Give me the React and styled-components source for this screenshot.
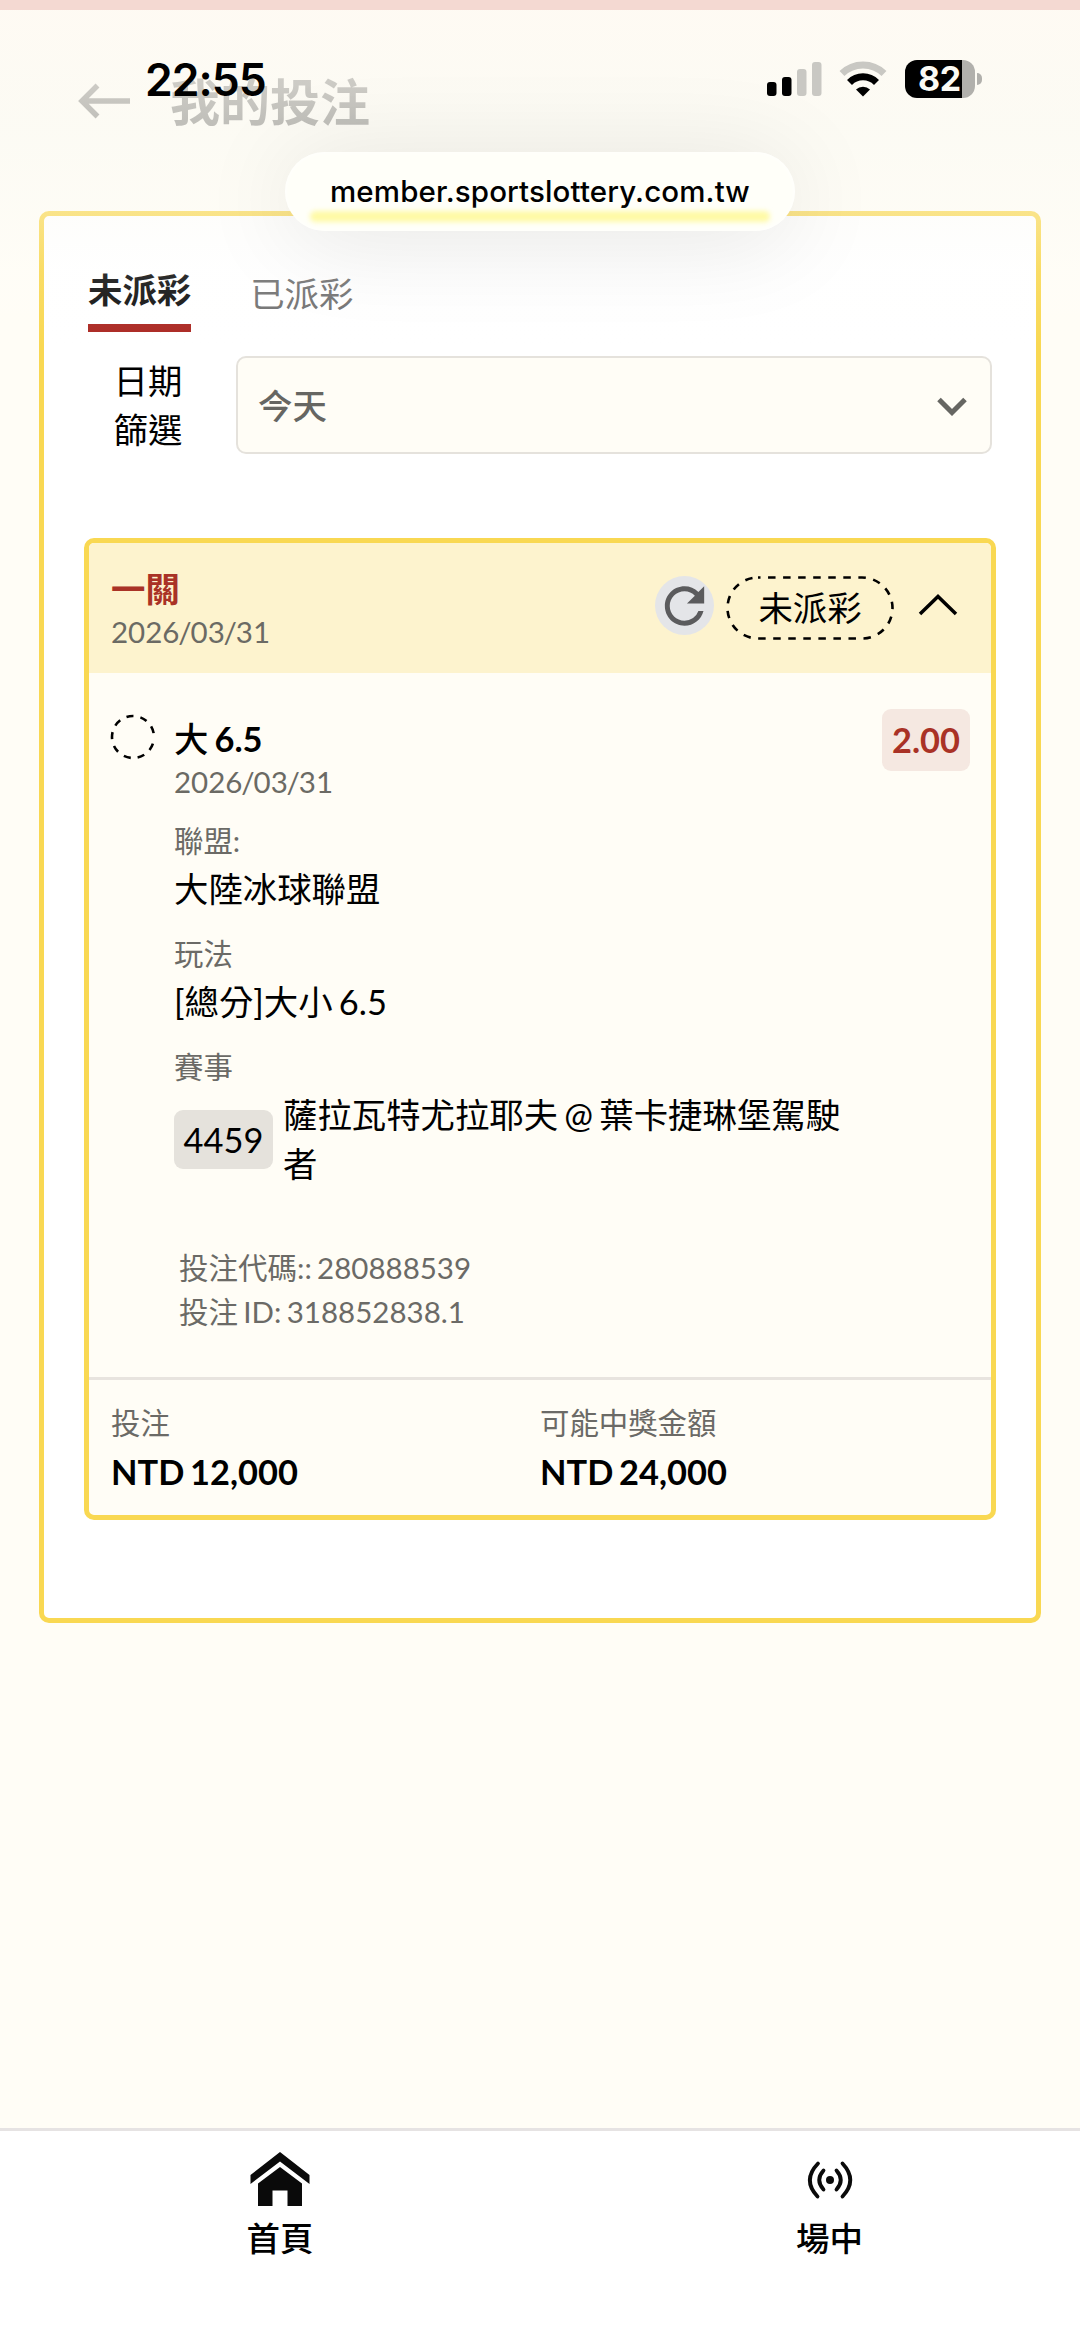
import React, { useState } from 'react'
import styled, { createGlobalStyle } from 'styled-components'
import { MdRefresh } from 'react-icons/md';


const GlobalStyle = createGlobalStyle`
    * {
        box-sizing: border-box;
        word-spacing: -0.075em;
    }
    body {
        margin: 0;
        background-color: #fffdf6;
        font-family: "Lato", "Noto Sans CJK TC", sans-serif;
        color: black;
    }
`;

const Container = styled.div`
    position: relative;
    width: 1080px;
    height: 2347px;
    display: flex;
    flex-direction: column;
    overflow: hidden;
    background-color: #fffdf6;
`;

const Header = styled.header`
    height: 211px;
    padding: 75px 0px 0px 77px;
    display: flex;
    align-items: flex-start;
    gap: 38px;
`;

const Title = styled.h1`
    margin: 0;
    font-size: 50px;
    line-height: 54px;
    font-weight: 700;
`;

const BackIcon = styled.svg`
    width: 55px;
    height: 54px;
`;

/* translucent system area that floats over the scrolled page */
const SystemArea = styled.div`
    position: absolute;
    top: 0;
    left: 0;
    width: 100%;
    height: 350px;
    border-top: 10px solid #f4d9d2;
    background: linear-gradient(to bottom, rgba(254,250,243,0.84) 0px, rgba(252,250,243,0.81) 75px,
        rgba(251,250,243,0.76) 116px, rgba(251,250,244,0.33) 205px, rgba(253,253,251,0.12) 260px, rgba(255,255,255,0) 340px);
    display: flex;
    flex-direction: column;
    align-items: center;
`;

const StatusBar = styled.div`
    width: 100%;
    height: 142px;
    padding: 43px 98px 0px 145px;
    display: flex;
    justify-content: space-between;
    align-items: flex-start;
    font-family: "Inter", sans-serif;
`;

const Time = styled.span`
    font-size: 44.5px;
    line-height: 54px;
    font-weight: 600;
    letter-spacing: -1px;
`;

const StatusIcons = styled.div`
    display: flex;
    padding-top: 7px;
`;

const Signal = styled.svg`
    width: 55px;
    height: 38px;
    margin-right: 17px;
`;

const Wifi = styled.svg`
    width: 48px;
    height: 38px;
    margin-right: 18px;
`;

const Battery = styled.div`
    width: 70px;
    height: 38px;
    border-radius: 12px;
    background: linear-gradient(to right, black 57px, #b1b0ac 57px);
    color: #fbfaf4;
    font-size: 34px;
    line-height: 38px;
    font-weight: 700;
    letter-spacing: -0.5px;
    padding-left: 13px;
`;

const BatteryTip = styled.div`
    width: 5px;
    height: 12px;
    margin: 13px 0px 0px 2px;
    border-radius: 0px 5px 5px 0px;
    background-color: #b1b0ac;
`;

const AddressPill = styled.div`
    position: relative;
    width: 510px;
    height: 79px;
    flex-shrink: 0;
    border-radius: 40px;
    background-color: #fffff9;
    box-shadow: 0px 8px 96px rgba(0,0,0,0.1), inset 0px 0px 5px white;
    display: flex;
    justify-content: center;
    font-family: "Inter", sans-serif;
    font-size: 29.5px;
    line-height: 79px;
    font-weight: 500;
    letter-spacing: 0.13px;
`;

const PillGlow = styled.div`
    position: absolute;
    left: 25px;
    right: 25px;
    bottom: 9px;
    height: 11px;
    border-radius: 6px;
    background-color: #fffaa6;
    filter: blur(2.5px);
`;

const Panel = styled.main`
    margin: 0px 39px;
    height: 1412px;
    padding: 48px 40px 0px;
    border: 5px solid #f9d852;
    border-radius: 10px;
    background-color: white;
`;

const Tabs = styled.div`
    display: flex;
    align-items: flex-start;
    gap: 59px;
    padding-left: 4px;
    height: 68px;
`;

const Tab = styled.div`
    font-size: 34.4px;
    line-height: 52px;
    cursor: pointer;
    font-weight: ${props=>props.$active ? "700" : "400"};
    color: ${props=>props.$active ? "#111" : "#707070"};
    padding: ${props=>props.$active ? "0px 0px 8px" : "4px 0px"};
    border-bottom: ${props=>props.$active ? "8px solid #ab2822" : "none"};
`;

const Filter = styled.div`
    display: flex;
    align-items: center;
    margin-top: 24px;
    padding: 0px 4px 0px 29px;
`;

const FilterLabel = styled.div`
    width: 70px;
    font-size: 34.4px;
    line-height: 49px;
    height: 98px;
    text-align: center;
`;

const Select = styled.div`
    flex: 1;
    height: 98px;
    margin-left: 53px;
    padding: 0px 23px 3px 20px;
    border: 2.5px solid #e5e2dc;
    border-radius: 10px;
    background-color: #fffdf6;
    display: flex;
    align-items: center;
    justify-content: space-between;
    font-size: 34.4px;
    font-weight: 500;
    color: #666662;
`;

const DownIcon = styled.svg`
    width: 30px;
    height: 19px;
    margin-top: 5px;
`;

const Slip = styled.section`
    margin-top: 84px;
    border: 5px solid #f9d852;
    border-radius: 10px;
    background-color: #fffdf6;
    overflow: hidden;
`;

const SlipHeader = styled.div`
    height: 130px;
    padding: 0px 32px 0px 22px;
    background-color: #fdf3ce;
    display: flex;
    align-items: center;
    justify-content: space-between;
`;

const SlipTitle = styled.div`
    font-size: 34.4px;
    line-height: 46px;
    font-weight: 700;
    color: #a93226;
`;

const DateText = styled.div`
    margin: 1px 0px -1px;
    font-size: 29.5px;
    line-height: 38px;
    color: #6b6a64;
`;

const Slash = styled.span`
    margin: 0px -1.15px;
`;

const Actions = styled.div`
    display: flex;
    align-items: center;
`;

const RefreshButton = styled.div`
    width: 59px;
    height: 59px;
    margin: 0px 12px 5px 0px;
    border-radius: 50%;
    background-color: #e4e5e8;
    color: #5b5b5d;
    display: flex;
    align-items: center;
    justify-content: center;
`;

const StatusBadge = styled.div`
    position: relative;
    width: 168px;
    height: 64px;
    text-align: center;
    font-size: 34.4px;
    line-height: 64px;
`;

const BadgeOutline = styled.svg`
    position: absolute;
    top: 0;
    left: 0;
`;

const UpIcon = styled.svg`
    margin: 0px 0px 7px 23px;
`;

const SlipBody = styled.div`
    height: 704px;
    padding: 0px 21px;
    display: flex;
    align-items: flex-start;
`;

const PendingIcon = styled.svg`
    margin-top: 41px;
    flex-shrink: 0;
`;

const Selection = styled.div`
    flex: 1;
    margin-left: 18px;
    padding-top: 43px;
`;

const SelectionTitle = styled.div`
    font-size: 34.4px;
    line-height: 46px;
    font-weight: 500;
`;

const Strong = styled.span`
    font-weight: 700;
`;

const Field = styled.div`
    margin-top: 21px;
`;

const Label = styled.div`
    font-size: 29.4px;
    line-height: 40px;
    color: #6b6a66;
`;

const Value = styled.div`
    margin-top: 3px;
    font-size: 34.4px;
    line-height: 49px;
`;

const Match = styled.div`
    display: flex;
    align-items: center;
    gap: 10px;
    margin-top: 3px;
`;

const MatchCode = styled.div`
    width: 99px;
    height: 59px;
    flex-shrink: 0;
    border-radius: 9px;
    background-color: #e5e2dc;
    text-align: center;
    font-size: 34.4px;
    line-height: 59px;
`;

const MatchName = styled.div`
    width: 575px;
    font-size: 34.4px;
    line-height: 49px;
`;

const Meta = styled.div`
    margin: 58px 0px 0px 5px;
    font-size: 29.5px;
    line-height: 44px;
    color: #6b6a66;
`;

const Odds = styled.div`
    width: 88px;
    height: 62px;
    margin-top: 36px;
    border-radius: 9px;
    background-color: #f5e8e1;
    color: #a93226;
    text-align: center;
    font-size: 34.4px;
    line-height: 62px;
    font-weight: 700;
`;

const SlipFooter = styled.div`
    height: 138px;
    padding: 23px 22px 0px;
    border-top: 3px solid #e8e4df;
    display: grid;
    grid-template-columns: 429px 1fr;
`;

const Amount = styled.div`
    margin-top: 4px;
    font-size: 34.4px;
    line-height: 50px;
    font-weight: 700;
`;

const BottomNav = styled.nav`
    display: flex;
    height: 219px;
    margin-top: auto;
    border-top: 3px solid #e6e3e3;
    background-color: white;
`;

const NavItem = styled.div`
    width: ${props=>props.$width}px;
    flex-shrink: 0;
    padding-top: 18px;
    display: flex;
    flex-direction: column;
    align-items: center;
    font-size: 33.5px;
    line-height: 48px;
    font-weight: 500;
`;

const NavIcon = styled.svg`
    width: 66px;
    height: 60px;
    margin-bottom: 5px;
`;

const fields = [
    { label: "聯盟:", value: "大陸冰球聯盟" },
    { label: "玩法", value: "[總分]大小 6.5" },
];

const amounts = [
    { label: "投注", value: "NTD 12,000" },
    { label: "可能中獎金額", value: "NTD 24,000" },
];

const BetDate = () => (
    <DateText>2026<Slash>/</Slash>03<Slash>/</Slash>31</DateText>
)

const App = () => {
  const [tab, setTab] = useState(0);

  return (
    <>
        <GlobalStyle />
        <Container>
            <Header>
                <BackIcon viewBox="0 0 55 54" fill="none" stroke="black" strokeWidth="5.5">
                    <path d="M53 26H6M20.500 10.500L5 26L20.500 41.500" />
                </BackIcon>
                <Title>我的投注</Title>
            </Header>
            <Panel>
                <Tabs>
                    {["未派彩", "已派彩"].map((name, i) => (
                        <Tab key={name} $active={tab === i} onClick={() => setTab(i)}>{name}</Tab>
                    ))}
                </Tabs>
                <Filter>
                    <FilterLabel>日期篩選</FilterLabel>
                    <Select>
                        今天
                        <DownIcon viewBox="0 0 30 19" fill="none" stroke="#666662" strokeWidth="5">
                            <path d="M2 2.500L15 15.500L28 2.500" />
                        </DownIcon>
                    </Select>
                </Filter>
                <Slip>
                    <SlipHeader>
                        <div>
                            <SlipTitle>一關</SlipTitle>
                            <BetDate />
                        </div>
                        <Actions>
                            <RefreshButton><MdRefresh size={60} /></RefreshButton>
                            <StatusBadge>
                                <BadgeOutline width="168" height="64" fill="none" stroke="black">
                                    <rect x="1.500" y="1.500" width="165" height="61" rx="30.500" strokeWidth="2.600" strokeDasharray="7.500 7.550" strokeDashoffset="5" />
                                </BadgeOutline>
                                未派彩
                            </StatusBadge>
                            <UpIcon width="42" height="24" viewBox="0 0 42 24" fill="none" stroke="black" strokeWidth="3.500">
                                <path d="M3 21L21 3.500L39 21" />
                            </UpIcon>
                        </Actions>
                    </SlipHeader>
                    <SlipBody>
                        <PendingIcon width="46" height="46" fill="none" stroke="black">
                            <circle cx="23" cy="23" r="21" strokeWidth="2.600" strokeDasharray="7.100 7.050" strokeDashoffset="-6.800" />
                        </PendingIcon>
                        <Selection>
                            <SelectionTitle>大 <Strong>6.5</Strong></SelectionTitle>
                            <BetDate />
                            {fields.map((field) => (
                                <Field key={field.label}>
                                    <Label>{field.label}</Label>
                                    <Value>{field.value}</Value>
                                </Field>
                            ))}
                            <Field>
                                <Label>賽事</Label>
                                <Match>
                                    <MatchCode>4459</MatchCode>
                                    <MatchName>薩拉瓦特尤拉耶夫 @ 葉卡捷琳堡駕駛者</MatchName>
                                </Match>
                            </Field>
                            <Meta>
                                投注代碼:: 280888539<br/>
                                投注 ID: 318852838.1
                            </Meta>
                        </Selection>
                        <Odds>2.00</Odds>
                    </SlipBody>
                    <SlipFooter>
                        {amounts.map((item) => (
                            <div key={item.label}>
                                <Label>{item.label}</Label>
                                <Amount>{item.value}</Amount>
                            </div>
                        ))}
                    </SlipFooter>
                </Slip>
            </Panel>
            <BottomNav>
                <NavItem $width={560}>
                    <NavIcon viewBox="0 0 66 60" fill="#0a0a0a">
                        <path d="M33 3L62.500 26V35L33 12.500L3.500 35V26Z" />
                        <path d="M33 18L55 34.500V57H40.500V41.500H25.500V57H11V34.500Z" />
                    </NavIcon>
                    首頁
                </NavItem>
                <NavItem $width={539}>
                    <NavIcon viewBox="0 0 66 60" fill="none" stroke="#0a0a0a" strokeWidth="3.800" strokeLinecap="round">
                        <circle cx="33" cy="31" r="4" fill="#0a0a0a" stroke="none" />
                        <path d="M26.500 21.500Q18 31 26.500 40.500M39.500 21.500Q48 31 39.500 40.500" />
                        <path d="M21 14.500Q5 31 20.500 47.500M45.500 14.500Q61 31 45.500 47.500" />
                    </NavIcon>
                    場中
                </NavItem>
            </BottomNav>
            <SystemArea>
                <StatusBar>
                    <Time>22:55</Time>
                    <StatusIcons>
                        <Signal viewBox="0 0 55 38">
                            <rect x="0" y="22" width="9.500" height="14" rx="3" />
                            <rect x="15" y="17" width="9.500" height="19" rx="3" />
                            <rect x="30" y="9" width="9.500" height="27" rx="3" fill="#c9c8c3" />
                            <rect x="45" y="2" width="9.500" height="34" rx="3" fill="#c9c8c3" />
                        </Signal>
                        <Wifi viewBox="0 0 48 38" fill="none" strokeWidth="7">
                            <path d="M3 13.500A30 30 0 0 1 45 13.500" stroke="#c9c8c3" />
                            <path d="M10.500 22.500A19 19 0 0 1 37.500 22.500" stroke="black" />
                            <path d="M17 29.500A10 10 0 0 1 31 29.500L24 36.500Z" fill="black" />
                        </Wifi>
                        <Battery>82</Battery>
                        <BatteryTip />
                    </StatusIcons>
                </StatusBar>
                <AddressPill>
                    member.sportslottery.com.tw
                    <PillGlow />
                </AddressPill>
            </SystemArea>
        </Container>
    </>
  )
}

export default App
